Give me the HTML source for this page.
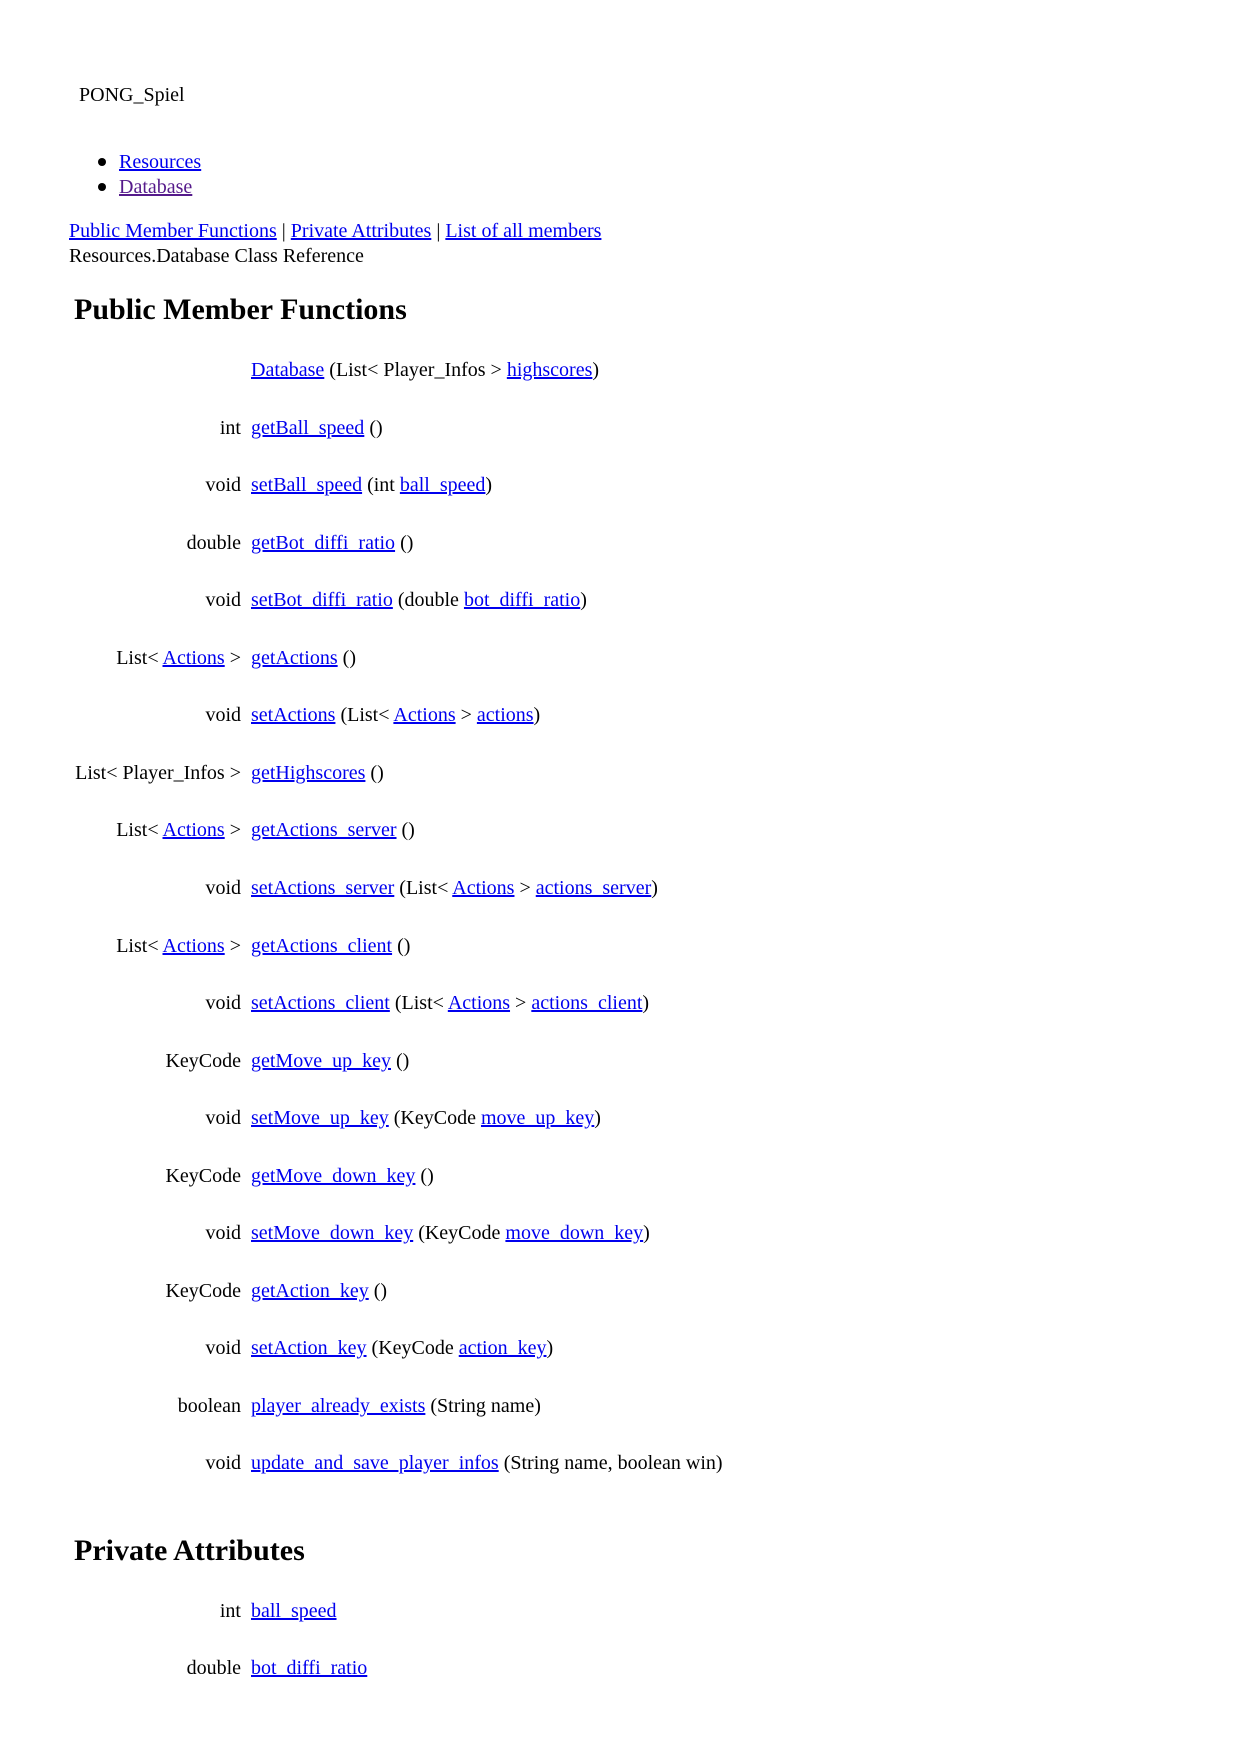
<!DOCTYPE html>
<html><head><meta charset="utf-8"><style>
body{margin:0;width:1240px;height:1755px;background:#fff;font-family:"Liberation Serif",serif;font-size:20px;color:#000;position:relative;}
a{color:#0000ee;text-decoration:underline;}
.v{color:#551a8b;}
.t{position:absolute;white-space:nowrap;line-height:22px;}
.r{position:absolute;right:999px;white-space:nowrap;line-height:22px;}
.l{position:absolute;left:251px;white-space:nowrap;line-height:22px;}
h2{position:absolute;margin:0;font-size:30px;font-weight:bold;white-space:nowrap;line-height:34px;}
.dot{position:absolute;width:8px;height:8px;border-radius:50%;background:#000;}
</style></head><body>
<div class="t" style="left:79px;top:84px">PONG_Spiel</div>
<div class="dot" style="left:98px;top:158px"></div>
<div class="t" style="left:119px;top:151px"><a href="#">Resources</a></div>
<div class="dot" style="left:98px;top:183px"></div>
<div class="t" style="left:119px;top:176px"><a class="v" href="#">Database</a></div>
<div class="t" style="left:69px;top:220px"><a href="#">Public Member Functions</a> | <a href="#">Private Attributes</a> | <a href="#">List of all members</a></div>
<div class="t" style="left:69px;top:245px">Resources.Database Class Reference</div>
<h2 style="left:74px;top:293px">Public Member Functions</h2>

<div class="l" style="top:359px"><a href="#">Database</a> (List&lt; Player_Infos &gt; <a href="#">highscores</a>)</div>

<div class="r" style="top:417px">int</div><div class="l" style="top:417px"><a href="#">getBall_speed</a> ()</div>
<div class="r" style="top:474px">void</div><div class="l" style="top:474px"><a href="#">setBall_speed</a> (int <a href="#">ball_speed</a>)</div>
<div class="r" style="top:532px">double</div><div class="l" style="top:532px"><a href="#">getBot_diffi_ratio</a> ()</div>
<div class="r" style="top:589px">void</div><div class="l" style="top:589px"><a href="#">setBot_diffi_ratio</a> (double <a href="#">bot_diffi_ratio</a>)</div>
<div class="r" style="top:647px">List&lt; <a href="#">Actions</a> &gt;</div><div class="l" style="top:647px"><a href="#">getActions</a> ()</div>
<div class="r" style="top:704px">void</div><div class="l" style="top:704px"><a href="#">setActions</a> (List&lt; <a href="#">Actions</a> &gt; <a href="#">actions</a>)</div>
<div class="r" style="top:762px">List&lt; Player_Infos &gt;</div><div class="l" style="top:762px"><a href="#">getHighscores</a> ()</div>
<div class="r" style="top:819px">List&lt; <a href="#">Actions</a> &gt;</div><div class="l" style="top:819px"><a href="#">getActions_server</a> ()</div>
<div class="r" style="top:877px">void</div><div class="l" style="top:877px"><a href="#">setActions_server</a> (List&lt; <a href="#">Actions</a> &gt; <a href="#">actions_server</a>)</div>
<div class="r" style="top:935px">List&lt; <a href="#">Actions</a> &gt;</div><div class="l" style="top:935px"><a href="#">getActions_client</a> ()</div>
<div class="r" style="top:992px">void</div><div class="l" style="top:992px"><a href="#">setActions_client</a> (List&lt; <a href="#">Actions</a> &gt; <a href="#">actions_client</a>)</div>
<div class="r" style="top:1050px">KeyCode</div><div class="l" style="top:1050px"><a href="#">getMove_up_key</a> ()</div>
<div class="r" style="top:1107px">void</div><div class="l" style="top:1107px"><a href="#">setMove_up_key</a> (KeyCode <a href="#">move_up_key</a>)</div>
<div class="r" style="top:1165px">KeyCode</div><div class="l" style="top:1165px"><a href="#">getMove_down_key</a> ()</div>
<div class="r" style="top:1222px">void</div><div class="l" style="top:1222px"><a href="#">setMove_down_key</a> (KeyCode <a href="#">move_down_key</a>)</div>
<div class="r" style="top:1280px">KeyCode</div><div class="l" style="top:1280px"><a href="#">getAction_key</a> ()</div>
<div class="r" style="top:1337px">void</div><div class="l" style="top:1337px"><a href="#">setAction_key</a> (KeyCode <a href="#">action_key</a>)</div>
<div class="r" style="top:1395px">boolean</div><div class="l" style="top:1395px"><a href="#">player_already_exists</a> (String name)</div>
<div class="r" style="top:1452px">void</div><div class="l" style="top:1452px"><a href="#">update_and_save_player_infos</a> (String name, boolean win)</div>

<h2 style="left:74px;top:1534px">Private Attributes</h2>
<div class="r" style="top:1600px">int</div><div class="l" style="top:1600px"><a href="#">ball_speed</a></div>
<div class="r" style="top:1657px">double</div><div class="l" style="top:1657px"><a href="#">bot_diffi_ratio</a></div>
</body></html>
